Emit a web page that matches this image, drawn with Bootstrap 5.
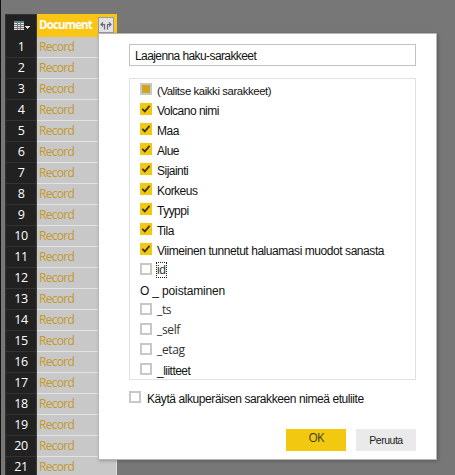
<!DOCTYPE html>
<html lang="fi">
<head>
<meta charset="utf-8">
<title>Laajenna haku-sarakkeet</title>
<link href="https://cdn.jsdelivr.net/npm/bootstrap@5.3.0/dist/css/bootstrap.min.css" rel="stylesheet">
<style>
html,body{height:475px;overflow:hidden}
body{background:#777;font-family:"Liberation Sans",Arial,sans-serif;font-size:12px;line-height:20px;color:#111}
.edge{width:5px;border-left:1px solid #111;background:#777}
.grid{width:112px;padding-top:14px;font-family:"Open Sans","Noto Sans",sans-serif}
.head{height:23px;background:#fac514}
.corner{width:32px;height:23px;background:#212121;border:1px solid #333;border-bottom:0;border-right-color:#3d3932}
.head-label{color:#fff;font-weight:700;font-size:11.5px;width:61px;padding-left:2px;letter-spacing:-.85px;line-height:22px}
.expand{width:16px;height:16px;margin-top:3px;background:#e0e2e8;border:1px solid #9a9ca2}
.num{width:32px;height:21px;background:#212121;border:1px solid #333;border-top:0;border-right-color:#3d3d3d;color:#fff;font-size:12.5px;line-height:20px;letter-spacing:-.4px}
.rec{height:21px;background:#c8c8c8;border-bottom:1px solid #e3e3e3;border-right:1px solid #ddd;color:#c39a29;font-size:12px;padding-left:2px;line-height:20px;letter-spacing:-.7px}
.panel{left:98px;top:33px;width:339px;height:427px;background:#fff;border:1px solid #b5b8b5;padding:10px 20px 0 30px;box-shadow:1px 1px 3px rgba(0,0,0,.25)}
.title-box{height:22px;border:1px solid #c3c3c3;padding-left:5px;line-height:22px;width:287px}
.list{height:302px;width:287px;margin-top:12px;border:1px solid #dfe2e5;padding:1px 0 0 10px}
.item{height:20px}
.tick{width:12px;height:12px;flex:none;background:#f2c811;margin-top:-2px}
.tick-off{background:#fff;border:2px solid #c8c8c8}
.tick-some{background:#cfa51d;border:2px solid #c8c8c8}
.txt{margin-left:5px;line-height:16px;padding-top:2px;height:18px;white-space:pre}
.seg{font-family:"Open Sans","Noto Sans",sans-serif;color:#333;font-size:12px;letter-spacing:-.35px;padding-top:1px}
.dots{border:1px dotted #222;height:16px;line-height:15px;padding:0;margin-left:4px;width:11px;color:#333;letter-spacing:-.3px}
.t0{letter-spacing:-.59px}
.t1{letter-spacing:-.38px;font-size:11.3px}
.t2{letter-spacing:-.52px}
.t3{letter-spacing:-.44px}
.t4{letter-spacing:-.15px}
.t5{letter-spacing:-.42px}
.opt{margin-top:8px;height:20px}
.opt .txt{margin-left:6px}
.acts{gap:10px;margin-top:21px}
.act{width:60px;height:22px;border-radius:0;padding:0;border:0;font-size:11px;line-height:23px;color:#222}
.ok{background:#f2c811;font:12px/18px "Open Sans","Noto Sans",sans-serif;color:#403a20;letter-spacing:-.9px;padding-bottom:4px}
.cancel{background:#eaeaea;font-size:10.500px;letter-spacing:-.5px;line-height:22px}
</style>
<script src="https://cdn.jsdelivr.net/npm/bootstrap@5.3.0/dist/js/bootstrap.bundle.min.js"></script>
</head>
<body class="position-relative">
<svg class="d-none"><symbol id="check" viewBox="0 0 12 12"><path d="M2.3 5.8 4.8 8.4 9.6 2.9" fill="none" stroke="#383319" stroke-width="1.7"/></symbol></svg>
<div class="d-flex h-100">
  <div class="edge flex-shrink-0"></div>
  <div class="grid d-block flex-shrink-0">
    <div class="head d-flex">
      <div class="corner flex-shrink-0"><svg class="d-block" width="30" height="22" shape-rendering="crispEdges"><path fill="#777" d="M8 6h10v9H8z"/><path fill="#2f91ab" d="M8 6h10v1H8z"/><path fill="#e4e4e4" d="M8 8h3v1H8zM12 8h2v1h-2zM15 8h3v1h-3zM8 10h3v1H8zM12 10h2v1h-2zM15 10h3v1h-3zM8 12h3v1H8zM12 12h2v1h-2zM15 12h3v1h-3zM8 14h3v1H8zM12 14h2v1h-2zM15 14h3v1h-3z"/><path fill="#ddd" d="M19 11h5v1h-1v1h-1v1h-1v-1h-1v-1h-1z"/></svg></div>
      <div class="head-label flex-shrink-0">Document</div>
      <div class="expand flex-shrink-0"><svg class="d-block" width="14" height="14" fill="none" stroke="#6a6a70" stroke-width="1.2"><path d="M5.500 11.500V6.500H2M4 4.500 2 6.500l2 2M8.500 11.500V6.500H12M10 4.500l2 2-2 2"/></svg></div>
    </div>
    <div id="rows"></div>
  </div>
</div>
<div class="panel position-absolute">
  <div class="title-box t0">Laajenna haku-sarakkeet</div>
  <div class="list">
    <div class="item d-flex align-items-center"><span class="tick tick-some"></span><span class="txt t1">(Valitse kaikki sarakkeet)</span></div>
    <div class="item d-flex align-items-center"><svg class="tick"><use href="#check"/></svg><span class="txt t2">Volcano nimi</span></div>
    <div class="item d-flex align-items-center"><svg class="tick"><use href="#check"/></svg><span class="txt t2">Maa</span></div>
    <div class="item d-flex align-items-center"><svg class="tick"><use href="#check"/></svg><span class="txt t2">Alue</span></div>
    <div class="item d-flex align-items-center"><svg class="tick"><use href="#check"/></svg><span class="txt t2">Sijainti</span></div>
    <div class="item d-flex align-items-center"><svg class="tick"><use href="#check"/></svg><span class="txt t2">Korkeus</span></div>
    <div class="item d-flex align-items-center"><svg class="tick"><use href="#check"/></svg><span class="txt t2">Tyyppi</span></div>
    <div class="item d-flex align-items-center"><svg class="tick"><use href="#check"/></svg><span class="txt t2">Tila</span></div>
    <div class="item d-flex align-items-center"><svg class="tick"><use href="#check"/></svg><span class="txt t3">Viimeinen tunnetut haluamasi muodot sanasta</span></div>
    <div class="item d-flex align-items-center"><span class="tick tick-off"></span><span class="txt dots">id</span></div>
    <div class="item d-flex align-items-center"><span class="txt t4 ms-0">O _ poistaminen</span></div>
    <div class="item d-flex align-items-center"><span class="tick tick-off"></span><span class="txt seg">_ts</span></div>
    <div class="item d-flex align-items-center"><span class="tick tick-off"></span><span class="txt seg">_self</span></div>
    <div class="item d-flex align-items-center"><span class="tick tick-off"></span><span class="txt seg">_etag</span></div>
    <div class="item d-flex align-items-center"><span class="tick tick-off"></span><span class="txt t2">_liitteet</span></div>
  </div>
  <div class="opt d-flex align-items-center"><span class="tick tick-off"></span><span class="txt t5">Käytä alkuperäisen sarakkeen nimeä etuliite</span></div>
  <div class="acts d-flex justify-content-end">
    <button class="btn act ok">OK</button><button class="btn act cancel">Peruuta</button>
  </div>
</div>
<script>
const rows = document.getElementById('rows');
for (let i = 1; i <= 21; i++) {
  rows.insertAdjacentHTML('beforeend', `<div class="d-flex"><div class="num text-center flex-shrink-0">${i}</div><div class="rec flex-fill">Record</div></div>`);
}
</script>
</body>
</html>
